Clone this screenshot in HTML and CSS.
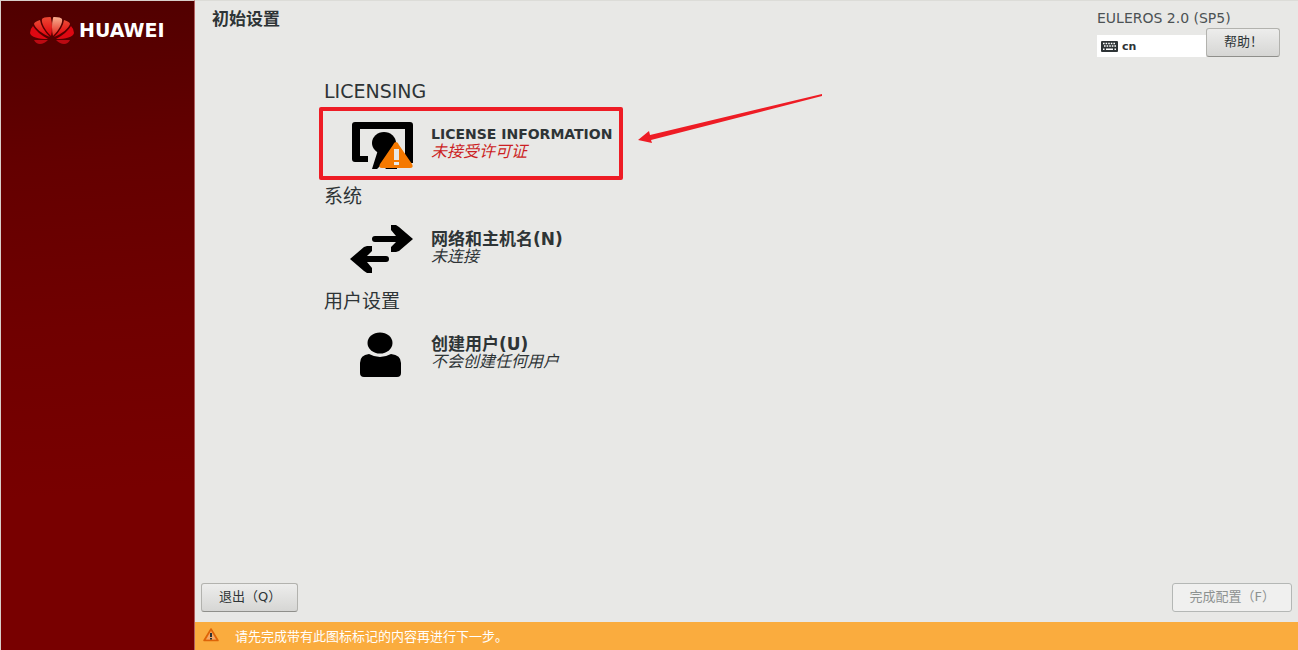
FILE: index.html
```html
<!DOCTYPE html>
<html lang="zh-CN">
<head>
    <meta charset="UTF-8">
    <meta name="viewport" content="width=device-width, initial-scale=1.0">
    <title>初始设置</title>
    <link rel="stylesheet" href="styles.css">
</head>
<body>
    <aside class="sidebar">
        <div class="brand">
            <svg width="44" height="30" viewBox="0 0 44 30" aria-hidden="true">
                <defs>
                    <linearGradient id="petal" x1="0" y1="0" x2="0" y2="1">
                        <stop offset="0" stop-color="#ec4a34"/>
                        <stop offset="1" stop-color="#e0000c"/>
                    </linearGradient>
                    <linearGradient id="petalLight" x1="0" y1="0" x2="0" y2="1">
                        <stop offset="0" stop-color="#f9b090"/>
                        <stop offset="1" stop-color="#e02018"/>
                    </linearGradient>
                </defs>
                <path fill="url(#petal)" d="M21 21C15 15 11 8 12 4Q13 2 20 2Q21 2 21 3Q23 12 21 21Z"/>
                <path fill="url(#petalLight)" d="M23 21Q21 12 23 3Q23 2 24 2Q31 2 32 4C33 8 29 15 23 21Z"/>
                <path fill="url(#petal)" d="M20 22C12 19 5 13 4 9Q4 7 10 5Q11 13 20 22Z"/>
                <path fill="url(#petal)" d="M24 22C32 19 39 13 40 9Q40 7 34 5Q33 13 24 22Z"/>
                <path fill="#dd0812" d="M18 24C8 24 1 22 0 18Q0 14 3 11Q7 18 18 24Z"/>
                <path fill="#dd0812" d="M26 24C36 24 43 22 44 18Q44 14 41 11Q37 18 26 24Z"/>
                <path fill="#bb0a12" d="M18 25Q14 29 10 29Q6 29 4 25Z"/>
                <path fill="#bb0a12" d="M26 25Q30 29 34 29Q38 29 40 25Z"/>
            </svg>
            <span>HUAWEI</span>
        </div>
    </aside>

    <div class="main">
        <header>
            <h1>初始设置</h1>
            <div class="product">
                <p>EULEROS 2.0 (SP5)</p>
                <div class="tools">
                    <button class="layout-button" type="button">
                        <svg width="17" height="11" viewBox="0 0 17 11" aria-hidden="true">
                            <rect width="17" height="11" rx="1" fill="#2e3436"/>
                            <path d="M2 2.5H15M3 5H15" stroke="#fff" stroke-width="1.4" stroke-dasharray="1.6 1"/>
                            <path d="M2 8.2H3.5M5 8.2H12M13.5 8.2H15" stroke="#fff" stroke-width="1.4"/>
                        </svg>
                        cn
                    </button>
                    <button class="btn" type="button">帮助！</button>
                </div>
            </div>
        </header>

        <main>
            <section>
                <h2>LICENSING</h2>
                <button class="spoke highlighted" type="button">
                    <svg width="64" height="50" viewBox="0 0 64 50" aria-hidden="true">
                        <path d="M5 3H60Q63 3 63 6V44H55V10H10V37H18V43H5Q2 43 2 40V6Q2 3 5 3Z"/>
                        <ellipse cx="34" cy="24" rx="12" ry="11"/>
                        <path d="M28 31L22 50H27L32 45L36 50H47V31Z"/>
                        <path d="M46 23Q48 23 49 26L62 45Q64 49 60 49H32Q28 49 30 45L43 26Q44 23 46 23Z" fill="#f57900"/>
                        <path d="M44 30H49V41H44ZM44 43H49V46H44Z" fill="#e8e8e6"/>
                    </svg>
                    <span class="spoke-text">
                        <strong>LICENSE INFORMATION</strong>
                        <em class="error">未接受许可证</em>
                    </span>
                    <svg class="pointer" width="186" height="54" viewBox="0 0 186 54" aria-hidden="true">
                        <path d="M1 46L12 37L13 41L185 0V2L14 46L15 49Z" fill="#ee1c25"/>
                    </svg>
                </button>
            </section>

            <section>
                <h2>系统</h2>
                <button class="spoke" type="button">
                    <svg width="64" height="50" viewBox="0 0 64 50" aria-hidden="true">
                        <path d="M41 1H46L49 3L63 15L49 27L46 28H41V23L46 18H25Q22 18 22 15T25 12H46L41 6Z"/>
                        <path d="M22 22H17L14 23L0 35L14 47L17 49H22V44L17 38H36Q39 38 39 35T36 32H17L22 27Z"/>
                    </svg>
                    <span class="spoke-text">
                        <strong class="zh">网络和主机名(N)</strong>
                        <em>未连接</em>
                    </span>
                </button>
            </section>

            <section>
                <h2>用户设置</h2>
                <button class="spoke" type="button">
                    <svg width="64" height="50" viewBox="0 0 64 50" aria-hidden="true">
                        <ellipse cx="30" cy="14" rx="12.500" ry="10.500"/>
                        <path d="M19 25Q30 31 41 25Q51 26 51 34V44Q51 48 47 48H14Q10 48 10 44V34Q10 26 19 25Z"/>
                    </svg>
                    <span class="spoke-text">
                        <strong class="zh">创建用户(U)</strong>
                        <em>不会创建任何用户</em>
                    </span>
                </button>
            </section>
        </main>

        <div class="actions">
            <button class="btn" type="button">退出（Q）</button>
            <button class="btn" type="button" disabled>完成配置（F）</button>
        </div>

        <footer>
            <svg width="16" height="14" viewBox="0 0 16 14" aria-hidden="true">
                <path d="M8 1L15 12.500H1Z" fill="#f07810" stroke="#dd6408" stroke-width="1.500" stroke-linejoin="round"/>
                <path d="M8 3L13 11.500H3Z" fill="#f3a868"/>
                <path d="M7 5H9V9H7ZM7 10H9V11.500H7Z" fill="#2e3436"/>
            </svg>
            <p>请先完成带有此图标标记的内容再进行下一步。</p>
        </footer>
    </div>
</body>
</html>
```
FILE: styles.css
```css
* {
    box-sizing: border-box;
}
body {
    margin: 0;
    display: flex;
    min-height: 100vh;
    background: #e8e8e6;
    color: #2e3436;
    font-family: "DejaVu Sans", "Noto Sans CJK SC", sans-serif;
    font-size: 13px;
}
h1, h2, p {
    margin: 0;
}
button {
    font: inherit;
    color: inherit;
}
.sidebar {
    flex: 0 0 195px;
    border: 1px solid #d8cfca;
    border-right-color: #b06060;
    border-bottom: 0;
    background: linear-gradient(175deg, #500000 0%, #640000 25%, #700000 50%, #780000 75%, #780000 100%);
}
.brand {
    display: flex;
    align-items: center;
    gap: 5px;
    padding: 14px 0 0 29px;
    color: #fff;
    font-size: 19px;
    font-weight: bold;
    line-height: 24px;
}
.main {
    flex: 1;
    display: flex;
    flex-direction: column;
    border-top: 1px solid #dcdcd8;
}
header {
    display: flex;
    justify-content: space-between;
    padding: 7px 18px 0 17px;
}
h1 {
    font-size: 17px;
    line-height: 22px;
}
.product p {
    color: #4c5254;
    font-size: 14px;
    line-height: 20px;
}
.tools {
    display: flex;
    align-items: flex-end;
}
.layout-button {
    display: flex;
    align-items: center;
    gap: 4px;
    width: 109px;
    height: 22px;
    padding: 0 4px;
    border: 0;
    background: #fff;
    font-size: 11px;
    font-weight: bold;
}
.btn {
    height: 29px;
    padding: 0 16px 2px 17px;
    border: 1px solid #b2b2ae;
    border-bottom-color: #8f8f8b;
    border-radius: 3px;
    background: linear-gradient(#ededec, #d6d6d4);
    line-height: 20px;
    white-space: nowrap;
}
.btn:disabled {
    border-color: #b4b7b5;
    background: #f0f0ef;
    color: #8d9291;
}
main {
    flex: 1;
    display: flex;
    flex-direction: column;
    gap: 4px;
    padding: 22px 0 0 124px;
}
h2 {
    padding-left: 5px;
    font-size: 19px;
    font-weight: normal;
    line-height: 24px;
}
.spoke {
    position: relative;
    display: flex;
    align-items: center;
    gap: 17px;
    width: 304px;
    height: 73px;
    margin-top: 4px;
    padding: 0 0 0 27px;
    border: 4px solid transparent;
    background: none;
    text-align: left;
}
.spoke.highlighted {
    border-color: #ee1c25;
    border-radius: 2px;
}
.spoke-text {
    display: flex;
    flex-direction: column;
    padding-bottom: 2px;
    line-height: 18px;
    white-space: nowrap;
}
.spoke strong {
    font-size: 14px;
}
.spoke .zh {
    font-size: 17px;
}
.spoke em {
    font-size: 16px;
}
.spoke .error {
    color: #cc1f24;
}
.pointer {
    position: absolute;
    left: 314px;
    top: -17px;
}
.actions {
    display: flex;
    justify-content: space-between;
    padding: 0 6px 10px;
}
footer {
    display: flex;
    align-items: center;
    gap: 16px;
    height: 28px;
    padding: 0 8px 2px;
    background: #faac3e;
    color: #fff;
}
```
